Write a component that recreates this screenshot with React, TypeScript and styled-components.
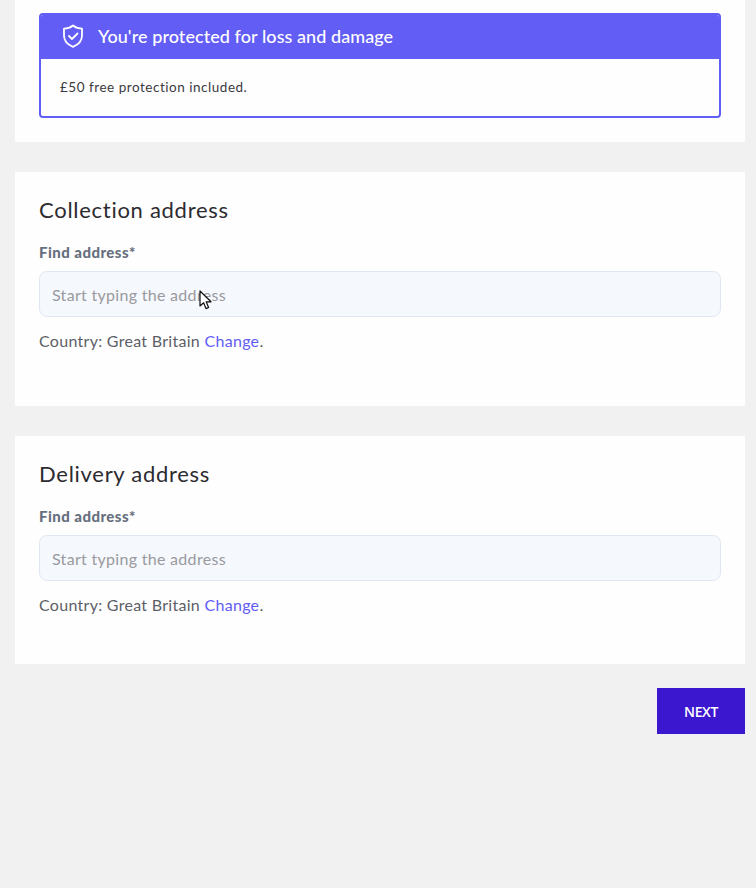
import React from "react";
import styled, { createGlobalStyle } from "styled-components";

const GlobalStyle = createGlobalStyle`
  html, body {
    margin: 0;
    padding: 0;
    background-color: #f1f1f2;
    font-family: "Lato", "Liberation Sans", sans-serif;
  }
`;

const Page = styled.div`
  width: 756px;
  height: 888px;
  box-sizing: border-box;
  padding: 0 11px 0 15px;
  overflow: hidden;
  display: flex;
  flex-direction: column;
`;

const Card = styled.section<{ $height: number; $gap?: number }>`
  background-color: #fffefe;
  height: ${(props) => props.$height}px;
  margin-bottom: ${(props) => props.$gap ?? 30}px;
  padding: 0 24px;
  box-sizing: border-box;
`;

const TopCard = styled(Card)`
  padding-top: 13px;
`;

const AddressCard = styled(Card)`
  padding-top: 24px;
`;

const Banner = styled.div`
  height: 105px;
  box-sizing: border-box;
  border: 2px solid #625df5;
  border-radius: 4px;
  overflow: hidden;
`;

const BannerHead = styled.div`
  height: 44px;
  box-sizing: border-box;
  padding: 0 0 2px 21px;
  background-color: #625df5;
  display: flex;
  align-items: center;
  gap: 14px;
  color: #fff;
  font-size: 18px;
  font-weight: 500;
  letter-spacing: 0.07px;
`;

const BannerBody = styled.p`
  margin: 0;
  padding: 19px 0 0 19px;
  font-size: 13.5px;
  line-height: 18px;
  letter-spacing: 0.52px;
  color: #3a3a40;
`;

const Heading = styled.h2`
  margin: 0;
  font-size: 22px;
  line-height: 27px;
  font-weight: 400;
  letter-spacing: 0.72px;
  color: #2b2b30;
`;

const Label = styled.label`
  display: block;
  margin-top: 21px;
  font-size: 15px;
  line-height: 17px;
  font-weight: 900;
  letter-spacing: 0.45px;
  color: #67707f;
`;

const FieldWrap = styled.div`
  position: relative;
  margin-top: 10px;
`;

const Field = styled.input`
  display: block;
  width: 100%;
  height: 46px;
  box-sizing: border-box;
  padding: 0 12px;
  background-color: #f5f8fc;
  border: 1px solid #e1e7f2;
  border-radius: 8px;
  font-family: inherit;
  font-size: 16px;
  letter-spacing: 0.3px;

  &::placeholder {
    color: #9a9a9f;
    opacity: 1;
  }
`;

const Pointer = styled.svg`
  position: absolute;
  left: 160px;
  top: 19px;
`;

const Country = styled.p`
  margin: 14px 0 0;
  font-size: 16px;
  line-height: 20px;
  letter-spacing: 0.29px;
  color: #5b5f68;
`;

const ChangeLink = styled.a`
  color: #625df5;
`;

const Actions = styled.div`
  display: flex;
  justify-content: flex-end;
  margin-top: -6px;
`;

const NextButton = styled.button`
  width: 88px;
  height: 46px;
  border: none;
  background-color: #3b17d0;
  color: #fff;
  font-family: "Open Sans", sans-serif;
  font-size: 14px;
  font-weight: 600;
  letter-spacing: -0.4px;
`;

const ShieldIcon = () => (
  <svg width="22" height="24" viewBox="0 0 22 24" fill="none" stroke="#fff" strokeWidth="1.8" strokeLinecap="round" strokeLinejoin="round">
    <path d="M11 1.5 C13.5 3.6 16.5 4.6 20 4.6 V11.5 C20 17 16.4 20.6 11 22.8 C5.6 20.6 2 17 2 11.5 V4.6 C5.5 4.6 8.5 3.6 11 1.5 Z" />
    <path d="M7 12 L10 15 L15.5 9.5" />
  </svg>
);

const CursorIcon = () => (
  <Pointer width="14" height="21" viewBox="0 0 14 21">
    <path d="M1 1 V16 L4.6 12.8 L7 18.6 L9.6 17.4 L7.2 11.8 H12 Z" fill="#fff" stroke="#111" strokeWidth="1.2" strokeLinejoin="round" />
  </Pointer>
);

const AddressSection: React.FC<{ title: string; height: number; gap?: number; showCursor?: boolean }> = ({
  title,
  height,
  gap,
  showCursor,
}) => (
  <AddressCard $height={height} $gap={gap}>
    <Heading>{title}</Heading>
    <Label>Find address*</Label>
    <FieldWrap>
      <Field placeholder="Start typing the address" />
      {showCursor && <CursorIcon />}
    </FieldWrap>
    <Country>
      Country: Great Britain <ChangeLink>Change</ChangeLink>.
    </Country>
  </AddressCard>
);

const App: React.FC = () => (
  <>
    <GlobalStyle />
    <Page>
      <TopCard $height={142}>
        <Banner>
          <BannerHead>
            <ShieldIcon />
            You're protected for loss and damage
          </BannerHead>
          <BannerBody>£50 free protection included.</BannerBody>
        </Banner>
      </TopCard>
      <AddressSection title="Collection address" height={234} showCursor />
      <AddressSection title="Delivery address" height={228} />
      <Actions>
        <NextButton>NEXT</NextButton>
      </Actions>
    </Page>
  </>
);

export default App;
